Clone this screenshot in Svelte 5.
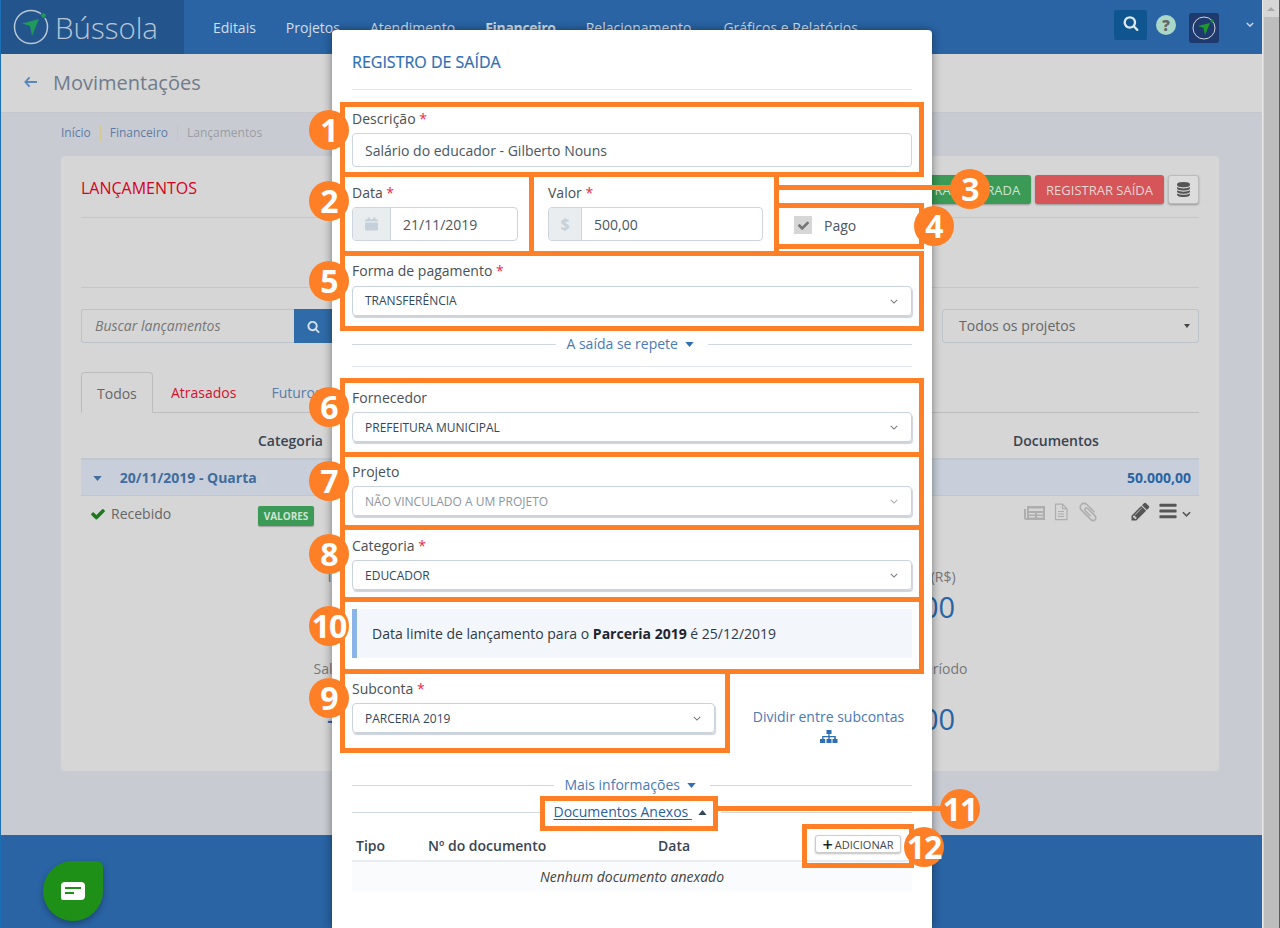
<script>
	const nav = ['Editais', 'Projetos', 'Atendimento', 'Financeiro', 'Relacionamento', 'Gráficos e Relatórios'];

	const icons = {
		search: 'M1216 832q0-185-131.500-316.500t-316.500-131.500-316.500 131.500-131.500 316.500 131.500 316.500 316.500 131.500 316.500-131.500 131.500-316.500zm512 832q0 52-38 90t-90 38q-54 0-90-38l-343-342q-179 124-399 124-143 0-273.500-55.500t-225-150-150-225-55.500-273.500 55.500-273.500 150-225 225-150 273.500-55.500 273.500 55.500 225 150 150 225 55.500 273.500q0 220-124 399l343 343q37 37 37 90z',
		check: 'M1671 566q0 40-28 68l-724 724-136 136q-28 28-68 28t-68-28l-136-136-362-362q-28-28-28-68t28-68l136-136q28-28 68-28t68 28l294 295 656-657q28-28 68-28t68 28l136 136q28 28 28 68z',
		pencil: 'M491 1536l91-91-235-235-91 91v107h128v128h107zm523-928q0-22-22-22-10 0-17 7l-542 542q-7 7-7 17 0 22 22 22 10 0 17-7l542-542q7-7 7-17zm-54-192l416 416-832 832h-416v-416zm683 96q0 53-37 90l-166 166-416-416 166-165q36-38 90-38 53 0 91 38l235 234q37 39 37 91z',
		bars: 'M1664 1344v128q0 26-19 45t-45 19h-1408q-26 0-45-19t-19-45v-128q0-26 19-45t45-19h1408q26 0 45 19t19 45zm0-512v128q0 26-19 45t-45 19h-1408q-26 0-45-19t-19-45v-128q0-26 19-45t45-19h1408q26 0 45 19t19 45zm0-512v128q0 26-19 45t-45 19h-1408q-26 0-45-19t-19-45v-128q0-26 19-45t45-19h1408q26 0 45 19t19 45z',
		database: 'M896 768q237 0 443-43t325-127v170q0 69-103 128t-280 93.500-385 34.500-385-34.500-280-93.500-103-128v-170q119 84 325 127t443 43zm0 768q237 0 443-43t325-127v170q0 69-103 128t-280 93.500-385 34.500-385-34.500-280-93.500-103-128v-170q119 84 325 127t443 43zm0-384q237 0 443-43t325-127v170q0 69-103 128t-280 93.500-385 34.500-385-34.500-280-93.500-103-128v-170q119 84 325 127t443 43zm0-1152q208 0 385 34.500t280 93.500 103 128v128q0 69-103 128t-280 93.500-385 34.500-385-34.500-280-93.500-103-128v-128q0-69 103-128t280-93.500 385-34.500z',
		clip: 'M1596 1385q0 117-79 196t-196 79q-135 0-235-100l-777-776q-113-115-113-271 0-159 110-270t269-111q158 0 273 113l605 606q10 10 10 22 0 16-30.500 46.500t-46.500 30.500q-13 0-23-10l-606-607q-79-77-181-77-106 0-179 75t-73 181q0 105 76 181l776 777q63 63 145 63 64 0 106-42t42-106q0-82-63-145l-581-581q-26-24-60-24-29 0-48 19t-19 48q0 32 25 59l410 410q10 10 10 22 0 16-31 47t-47 31q-12 0-22-10l-410-410q-63-61-63-149 0-82 57-139t139-57q88 0 149 63l581 581q100 98 100 235z'
	};

	// numbered callouts drawn over the screenshot
	const frames = [
		{ x: 340, y: 102, w: 584, h: 75 },
		{ x: 340, y: 172, w: 194, h: 84 },
		{ x: 529, y: 172, w: 250, h: 84 },
		{ x: 774, y: 203, w: 150, h: 46 },
		{ x: 340, y: 251, w: 584, h: 80 },
		{ x: 340, y: 378, w: 584, h: 79 },
		{ x: 340, y: 452, w: 584, h: 78 },
		{ x: 340, y: 525, w: 584, h: 77 },
		{ x: 340, y: 597, w: 584, h: 77 },
		{ x: 340, y: 669, w: 390, h: 84 },
		{ x: 540, y: 796, w: 178, h: 35 },
		{ x: 802, y: 824, w: 112, h: 44 }
	];
	const lines = [
		{ x: 778, y: 185, w: 180, h: 5 },
		{ x: 718, y: 806, w: 230, h: 5 }
	];
	const badges = [
		{ n: 1, x: 329, y: 130 },
		{ n: 2, x: 329, y: 201 },
		{ n: 3, x: 970, y: 189 },
		{ n: 4, x: 934, y: 226 },
		{ n: 5, x: 329, y: 281 },
		{ n: 6, x: 329, y: 407 },
		{ n: 7, x: 329, y: 481 },
		{ n: 8, x: 329, y: 554 },
		{ n: 10, x: 329, y: 626 },
		{ n: 9, x: 329, y: 698 },
		{ n: 11, x: 960, y: 809 },
		{ n: 12, x: 924, y: 847 }
	];
</script>

{#snippet fa(name, cls)}
	<svg class={cls} viewBox="0 0 1792 1792"><path d={icons[name]} /></svg>
{/snippet}

{#snippet chevron()}
	<svg class="chev" viewBox="0 0 10 6"><path d="M1 1l4 4 4-4" /></svg>
{/snippet}

{#snippet caret(up)}
	<svg class="caret" viewBox="0 0 10 6"><path d={up ? 'M0 6h10L5 0z' : 'M0 0h10L5 6z'} /></svg>
{/snippet}

<div class="page">
	<header class="topbar">
		<div class="brand">
			<svg class="logo" viewBox="0 0 36 36">
				<circle cx="18" cy="18" r="16.500" fill="none" stroke="#b9c6d4" stroke-width="1.500" />
				<circle cx="30.500" cy="6.500" r="3" fill="#24548c" />
				<circle cx="30.500" cy="6.500" r="2.300" fill="#1f9a5a" />
				<path d="M9 14.500L26 10l-7 17-2-10z" fill="#1f9a5a" />
			</svg>
			<span>Bússola</span>
		</div>
		<nav>
			{#each nav as item}
				<span class:active={item === 'Financeiro'}>{item}</span>
			{/each}
		</nav>
		<div class="tools">
			<div class="searchbtn">{@render fa('search', 'ico-search')}</div>
			<div class="help">?</div>
			<div class="avatar">
				<svg viewBox="0 0 30 30">
					<circle cx="15" cy="15" r="11" fill="none" stroke="#d0d4da" stroke-width="1" />
					<circle cx="23" cy="8" r="1.500" fill="#1f9a2a" />
					<path d="M9 13l12-3-5 12-1.500-7z" fill="#1f9a2a" />
				</svg>
			</div>
			<svg class="userchev" viewBox="0 0 10 6"><path d="M1 1l4 4 4-4" /></svg>
		</div>
	</header>

	<div class="subheader">
		<svg class="back" viewBox="0 0 14 12"><path d="M6 1L1.500 6 6 11M2 6h12" /></svg>
		<h1>Movimentações</h1>
	</div>

	<main>
		<div class="crumbs">
			<span>Início</span><span>Financeiro</span><span class="cur">Lançamentos</span>
		</div>

		<section class="card">
			<div class="cardhead">
				<h2>LANÇAMENTOS</h2>
				<div class="actions">
					<button class="btn green">REGISTRAR ENTRADA</button>
					<button class="btn red">REGISTRAR SAÍDA</button>
					<button class="btn dbbtn">{@render fa('database', 'ico-db')}</button>
				</div>
			</div>
			<div class="blank"></div>
			<div class="filters">
				<div class="searchbox">
					<span class="fakeinput">Buscar lançamentos</span>
					<span class="go">{@render fa('search', 'ico-go')}</span>
				</div>
				<div class="projects">Todos os projetos <i></i></div>
			</div>
			<div class="tabs">
				<span class="tab on">Todos</span>
				<span class="tab late">Atrasados</span>
				<span class="tab next">Futuros</span>
			</div>
			<div class="thead">
				<span class="th-cat">Categoria</span>
				<span class="th-doc">Documentos</span>
			</div>
			<div class="group">
				<span class="gleft">{@render caret(false)} 20/11/2019 - Quarta</span>
				<span class="gtotal">50.000,00</span>
			</div>
			<div class="row">
				<span class="status">{@render fa('check', 'ico-check')} Recebido</span>
				<span class="tag">VALORES</span>
				<div class="rowicons">
					<svg class="doc" viewBox="0 0 21 16"><path d="M3 1h18v14H2a2 2 0 0 1-2-2V4h2v9h1zM5 3.500v2.500h14V3.500zM5 8v1.500h6V8zm8 0v1.500h6V8zm-8 3v1.500h6V11zm8 0v1.500h6V11z" fill-rule="evenodd" /></svg>
					<svg class="doc file" viewBox="0 0 14 17"><path d="M1.500.7h7l4.500 4.500v11h-11.500zM8.500.7v4.500h4.500M4 8h6M4 10.500h6M4 13h6" /></svg>
					{@render fa('clip', 'ico-clip')}
					{@render fa('pencil', 'ico-pencil')}
					{@render fa('bars', 'ico-bars')}
					<svg class="rowchev" viewBox="0 0 10 6"><path d="M1 1l4 4 4-4" /></svg>
				</div>
			</div>
			<div class="stats">
				<div class="stat"><small>Total de entradas (R$)</small><b class="pos">50.000,00</b></div>
				<div class="stat"><small>Total das saídas (R$)</small><b>50.000,00</b></div>
				<div class="stat low"><small>Saldo anterior ao período</small><b>-50.000,00</b></div>
				<div class="stat low"><small>Saldo ao fim do período</small><b>50.000,00</b></div>
			</div>
		</section>
	</main>

	<footer>
		<div class="chat">
			<svg viewBox="0 0 24 18"><path d="M4 0h16a4 4 0 0 1 4 4v10a4 4 0 0 1-4 4H2a2 2 0 0 1-2-2V4a4 4 0 0 1 4-4z" fill="#fff" /><path d="M4 6h16M4 11h9" stroke="#1e9018" stroke-width="2" /></svg>
		</div>
	</footer>

	<div class="scrollbar"><div class="sb-up"></div><div class="sb-thumb"></div></div>

	<div class="modal">
		<h3>REGISTRO DE SAÍDA</h3>
		<hr class="titlerule" />

		<div class="field">
			<label>Descrição <em>*</em></label>
			<div class="input">Salário do educador - Gilberto Nouns</div>
		</div>

		<div class="split">
			<div class="field w-date">
				<label>Data <em>*</em></label>
				<div class="input addon">
					<span class="add cal">
						<svg viewBox="0 0 12 13"><path d="M0 5h12v6.500a1 1 0 0 1-1 1H1a1 1 0 0 1-1-1zM1 2h1.500V.5h2V2h3V.5h2V2H11a1 1 0 0 1 1 1v1H0V3a1 1 0 0 1 1-1z" /></svg>
					</span>
					<span class="val">21/11/2019</span>
				</div>
			</div>
			<div class="field w-value">
				<label>Valor <em>*</em></label>
				<div class="input addon">
					<span class="add money">$</span>
					<span class="val">500,00</span>
				</div>
			</div>
			<div class="paid">
				<span class="box">{@render fa('check', 'ico-box')}</span>
				<span>Pago</span>
			</div>
		</div>

		<div class="field sel-gap">
			<label>Forma de pagamento <em>*</em></label>
			<div class="select">TRANSFERÊNCIA {@render chevron()}</div>
		</div>

		<div class="fold first"><span>A saída se repete {@render caret(false)}</span></div>
		<hr class="rule" />

		<div class="field f-supplier">
			<label>Fornecedor</label>
			<div class="select">PREFEITURA MUNICIPAL {@render chevron()}</div>
		</div>
		<div class="field sel-gap2">
			<label>Projeto</label>
			<div class="select muted">NÃO VINCULADO A UM PROJETO {@render chevron()}</div>
		</div>
		<div class="field sel-gap2">
			<label>Categoria <em>*</em></label>
			<div class="select">EDUCADOR {@render chevron()}</div>
		</div>

		<div class="alert">Data limite de lançamento para o <strong>Parceria 2019</strong> é 25/12/2019</div>

		<div class="subrow">
			<div class="field w-sub">
				<label>Subconta <em>*</em></label>
				<div class="select">PARCERIA 2019 {@render chevron()}</div>
			</div>
			<div class="divide">
				<span>Dividir entre subcontas</span>
				<svg viewBox="0 0 18 13"><path d="M6.500 0h5v4h-2v2h6.300v3h1.700v4h-5V9h1.700V7.300H9.700V9h1.800v4h-5V9h1.800V7.300H3.500V9h1.700v4H0V9h2.200V6h6.100V4h-1.800z" /></svg>
			</div>
		</div>

		<div class="fold more"><span>Mais informações {@render caret(false)}</span></div>
		<div class="fold docs"><span><u>Documentos Anexos&nbsp;</u> {@render caret(true)}</span></div>

		<div class="doctable">
			<div class="dochead">
				<span class="c1">Tipo</span>
				<span class="c2">Nº do documento</span>
				<span class="c3">Data</span>
				<button class="add-doc"><b>+</b> ADICIONAR</button>
			</div>
			<div class="empty">Nenhum documento anexado</div>
		</div>
	</div>

	<div class="edge"></div>

	{#each frames as f}
		<div class="frame" style="left:{f.x}px;top:{f.y}px;width:{f.w}px;height:{f.h}px"></div>
	{/each}
	{#each lines as l}
		<div class="line" style="left:{l.x}px;top:{l.y}px;width:{l.w}px;height:{l.h}px"></div>
	{/each}
	{#each badges as b}
		<div class="badge" style="left:{b.x - 20}px;top:{b.y - 20}px">{b.n}</div>
	{/each}
</div>

<style>
:global(body) {
	margin: 0;
	font-family: "Open Sans", sans-serif;
	color: #555;
}
.page {
	position: relative;
	width: 1280px;
	height: 928px;
	overflow: hidden;
	background: #c8ccd2;
	display: flex;
	flex-direction: column;
	padding-right: 18px;
	box-sizing: border-box;
}
.edge {
	position: absolute;
	left: 0;
	top: 0;
	bottom: 0;
	width: 1px;
	background: #1a6fb5;
}
.topbar {
	height: 54px;
	flex: none;
	background: #2a64a5;
	display: flex;
	align-items: stretch;
}
.brand {
	width: 184px;
	background: #24548c;
	display: flex;
	align-items: center;
	padding-left: 13px;
	box-sizing: border-box;
	color: #b6c5d6;
	font-size: 29.500px;
	font-weight: 300;
	gap: 6px;
}
.logo {
	width: 36px;
	height: 36px;
	flex: none;
}
nav {
	display: flex;
	gap: 30px;
	padding-left: 29px;
	padding-top: 18px;
	font-size: 14px;
	line-height: 19px;
	color: #d3dfeb;
}
nav .active {
	font-weight: 700;
	letter-spacing: -0.300px;
}
nav span:last-child {
	margin-left: 2px;
}
.tools {
	margin-left: auto;
	display: flex;
	align-items: flex-start;
}
.searchbtn {
	width: 33px;
	height: 30px;
	margin-top: 10px;
	background: #0f5590;
	border-radius: 2px;
	display: flex;
	justify-content: center;
	padding-top: 5px;
	box-sizing: border-box;
}
.ico-search {
	width: 16px;
	height: 16px;
	fill: #dfe8ef;
}
.help {
	width: 20px;
	height: 20px;
	margin: 15px 0 0 9px;
	border-radius: 50%;
	background: #a9d8c8;
	color: #666;
	font-weight: 800;
	font-size: 15px;
	line-height: 20px;
	text-align: center;
}
.avatar {
	width: 30px;
	height: 30px;
	margin: 13px 0 0 13px;
	background: #1f3a6e;
	border-radius: 2px;
}
.avatar svg {
	display: block;
}
.userchev {
	width: 8px;
	height: 5px;
	margin: 22px 8px 0 27px;
	fill: none;
	stroke: #c8d6e6;
	stroke-width: 1.800;
}
.subheader {
	height: 59px;
	flex: none;
	background: #d6d6d6;
	border-bottom: 1px solid #c4c8cc;
	box-sizing: border-box;
	display: flex;
	align-items: center;
	padding-left: 24px;
	gap: 16px;
	padding-bottom: 2px;
}
.back {
	width: 13px;
	height: 12px;
	fill: none;
	stroke: #5b86b8;
	stroke-width: 2;
}
h1 {
	margin: 0;
	font-size: 20px;
	font-weight: 400;
	color: #6f7c8c;
}
main {
	flex: 1;
	padding: 12px 43px 0 61px;
	height: 722px;
}
.crumbs {
	display: flex;
	align-items: flex-start;
	font-size: 12px;
	line-height: 16px;
	color: #5f7ba5;
	height: 31px;
}
.crumbs span + span {
	border-left: 1px solid #d6c88a;
	margin-left: 9px;
	padding-left: 9px;
}
.crumbs .cur {
	color: #9a9da2;
}
.card {
	height: 615px;
	background: #d6d6d6;
	border-radius: 4px;
	padding: 0 20px;
	box-sizing: border-box;
	position: relative;
}
.cardhead {
	height: 62px;
	border-bottom: 1px solid #c6c6c6;
	display: flex;
	align-items: flex-start;
	justify-content: space-between;
	box-sizing: border-box;
}
h2 {
	margin: 21px 0 0;
	font-size: 16px;
	line-height: 22px;
	font-weight: 400;
	color: #d8001c;
}
.actions {
	display: flex;
	gap: 4px;
	margin-top: 19px;
}
.btn {
	height: 29px;
	border: 0;
	border-radius: 3px;
	font: 400 13px "Open Sans", sans-serif;
	box-shadow: 0 1px 2px rgba(0, 0, 0, 0.3);
	padding: 0;
}
.green {
	background: #3a9a56;
	color: #cfe3d5;
	width: 150px;
}
.red {
	background: #d55558;
	color: #e8d6d6;
	width: 129px;
}
.dbbtn {
	width: 31px;
	background: #dcdcdc;
	border: 1px solid #bbb;
	display: flex;
	align-items: center;
	justify-content: center;
}
.ico-db {
	width: 15px;
	height: 15px;
	fill: #555;
}
.blank {
	height: 70px;
	border-bottom: 1px solid #c6c6c6;
	box-sizing: border-box;
}
.filters {
	display: flex;
	justify-content: space-between;
	margin-top: 21px;
}
.searchbox {
	display: flex;
	height: 34px;
}
.fakeinput {
	width: 213px;
	border: 1px solid #bcc3ca;
	border-right: 0;
	border-radius: 3px 0 0 3px;
	box-sizing: border-box;
	font-size: 14px;
	font-style: italic;
	line-height: 32px;
	padding-left: 13px;
	color: #777;
}
.go {
	width: 44px;
	background: #2f6ba8;
	display: flex;
	align-items: center;
	justify-content: center;
	padding-right: 6px;
	box-sizing: border-box;
}
.ico-go {
	width: 13px;
	height: 13px;
	fill: #d6e0ea;
}
.projects {
	width: 257px;
	height: 34px;
	border: 1px solid #bcc3ca;
	border-radius: 3px;
	box-sizing: border-box;
	font-size: 14px;
	line-height: 32px;
	padding-left: 16px;
	color: #666;
	position: relative;
}
.projects i {
	position: absolute;
	right: 8px;
	top: 14px;
	border: 3.500px solid transparent;
	border-top: 4px solid #444;
	border-bottom: 0;
}
.tabs {
	margin-top: 29px;
	height: 40px;
	border-bottom: 1px solid #bcbcbc;
	display: flex;
	font-size: 14px;
	line-height: 42px;
	box-sizing: content-box;
}
.tab {
	padding: 0 17px 0 18px;
}
.tab.on {
	border: 1px solid #bcbcbc;
	border-bottom: 1px solid #d6d6d6;
	border-radius: 4px 4px 0 0;
	color: #666;
	height: 41px;
	box-sizing: border-box;
	line-height: 41px;
	width: 72px;
	padding: 0 0 0 15px;
}
.tab.late {
	color: #d8102c;
}
.tab.next {
	color: #5b7ba8;
}
.thead {
	height: 45px;
	position: relative;
	font-size: 14px;
	font-weight: 600;
	color: #3a4450;
}
.th-cat {
	position: absolute;
	left: 177px;
	top: 18px;
}
.th-doc {
	position: absolute;
	left: 932px;
	top: 18px;
}
.group {
	height: 38px;
	background: #c8cfda;
	border-top: 2px solid #c2c7cf;
	border-bottom: 1px solid #bfc6d0;
	box-sizing: border-box;
	display: flex;
	align-items: center;
	justify-content: space-between;
	padding: 0 8px 0 12px;
	font-size: 14px;
	font-weight: 700;
	color: #3f6d9e;
}
.gleft .caret {
	margin: 0 14px 0 0;
	width: 9px;
	height: 5px;
	fill: #3f6d9e;
}
.gtotal {
	color: #2a64a5;
}
.row {
	height: 40px;
	position: relative;
	font-size: 14px;
	color: #666;
}
.status {
	position: absolute;
	left: 9px;
	top: 8px;
	display: flex;
	align-items: center;
	gap: 5px;
	line-height: 20px;
}
.ico-check {
	width: 16px;
	height: 16px;
	fill: #1c7a1c;
}
.tag {
	position: absolute;
	left: 177px;
	top: 10px;
	width: 56px;
	height: 20px;
	background: #3a9a56;
	color: #cfe3d5;
	border-radius: 2px;
	font-size: 10px;
	font-weight: 700;
	line-height: 20px;
	text-align: center;
	box-shadow: 0 1px 1px rgba(0, 0, 0, 0.25);
}
.rowicons {
	position: absolute;
	left: 943px;
	top: 8px;
	width: 168px;
	height: 20px;
}
.rowicons > :global(svg) {
	position: absolute;
}
.doc {
	left: 0;
	top: 1px;
	width: 21px;
	height: 16px;
	fill: #aeaeae;
}
.file {
	left: 30px;
	top: -1px;
	width: 14px;
	height: 18px;
	fill: none;
	stroke: #aeaeae;
	stroke-width: 1.200;
}
.rowicons :global(.ico-clip) {
	left: 53px;
	top: -3px;
	width: 22px;
	height: 22px;
	fill: #aeaeae;
}
.rowicons :global(.ico-pencil) {
	left: 106px;
	top: -3px;
	width: 21px;
	height: 21px;
	fill: #555;
}
.rowicons :global(.ico-bars) {
	left: 134px;
	top: -3px;
	width: 20px;
	height: 20px;
	fill: #555;
}
.rowchev {
	left: 158px;
	top: 7px;
	width: 9px;
	height: 6px;
	fill: none;
	stroke: #555;
	stroke-width: 1.800;
}
.stats {
	display: grid;
	grid-template-columns: 490px 495px;
	margin: 31px 0 0 71px;
	row-gap: 32px;
}
.stat {
	text-align: center;
	display: flex;
	flex-direction: column;
}
.stat small {
	font-size: 14px;
	line-height: 20px;
	color: #777;
}
.stat b {
	font-size: 29px;
	font-weight: 400;
	line-height: 40px;
	color: #2a64a5;
}
.stat.low b {
	margin-top: 20px;
}
.stat b.pos {
	color: #1c7a1c;
	font-weight: 600;
}
footer {
	height: 93px;
	flex: none;
	background: #2a64a5;
	position: relative;
	margin-right: -18px;
}
.chat {
	position: absolute;
	left: 43px;
	top: 26px;
	width: 60px;
	height: 60px;
	background: #1e9018;
	border-radius: 50% 6px 50% 50%;
	box-shadow: 0 3px 6px rgba(0, 0, 0, 0.3);
	display: flex;
	align-items: center;
	justify-content: center;
}
.chat svg {
	width: 24px;
	height: 18px;
}
.scrollbar {
	position: absolute;
	right: 0;
	top: 0;
	bottom: 0;
	width: 18px;
	background: #d6d6d6;
	border-left: 1px solid #e8e8e8;
	border-right: 1px solid #2a64a5;
	box-sizing: border-box;
	padding-left: 1px;
}
.sb-up {
	height: 17px;
	position: relative;
}
.sb-up::after {
	content: '';
	position: absolute;
	left: 3px;
	top: 7px;
	border: 4px solid transparent;
	border-bottom: 4px solid #a8a8a8;
	border-top: 0;
}
.sb-thumb {
	height: 911px;
	background: #bdbdbd;
}

.modal {
	position: absolute;
	left: 332px;
	top: 30px;
	width: 600px;
	height: 898px;
	background: #fff;
	border-radius: 4px 4px 0 0;
	box-shadow: 0 0 10px rgba(0, 0, 0, 0.45);
	padding: 22px 20px 0;
	box-sizing: border-box;
	color: #4a5663;
}
h3 {
	margin: 0;
	font-size: 16px;
	line-height: 20px;
	font-weight: 500;
	color: #2f6db5;
	-webkit-text-stroke: 0.200px #2f6db5;
}
.titlerule {
	border: 0;
	border-top: 1px solid #e3e7eb;
	margin: 17px 0 18px;
}
.field label {
	display: block;
	font-size: 14px;
	line-height: 20px;
	padding-top: 1px;
	margin-bottom: 4px;
	color: #4a4f55;
}
.field em {
	color: #f02849;
	font-style: normal;
}
.input {
	height: 34px;
	border: 1px solid #cdd6df;
	border-radius: 4px;
	box-sizing: border-box;
	font-size: 14px;
	line-height: 34px;
	padding-left: 12px;
	color: #4a5663;
}
.addon {
	display: flex;
	padding: 0;
	overflow: hidden;
}
.add {
	background: #e9edf0;
	border-right: 1px solid #cdd6df;
	display: flex;
	align-items: center;
	justify-content: center;
	flex: none;
	color: #c5d1da;
	box-sizing: border-box;
}
.cal {
	width: 38px;
}
.cal svg {
	width: 13px;
	height: 14px;
	fill: #c5d1da;
}
.money {
	width: 33px;
	font-weight: 700;
	font-size: 16px;
}
.val {
	padding-left: 12px;
}
.split {
	display: grid;
	grid-template-columns: 166px 215px 1fr;
	column-gap: 30px;
	margin-top: 15px;
}
.paid {
	display: flex;
	align-items: center;
	font-size: 14px;
	padding: 31px 0 0 1px;
	gap: 12px;
	height: 24px;
}
.box {
	width: 18px;
	height: 18px;
	background: #d6d6d6;
	display: flex;
	align-items: center;
	justify-content: center;
}
.ico-box {
	width: 13px;
	height: 13px;
	fill: #777;
}
.select {
	height: 30px;
	border: 1px solid #c9d3dd;
	border-radius: 4px;
	box-shadow: 1px 2px 1px rgba(90, 110, 130, 0.3);
	box-sizing: border-box;
	font-size: 12px;
	line-height: 30px;
	padding-left: 12px;
	color: #33475b;
	position: relative;
}
.select.muted {
	color: #8c959f;
}
.chev {
	position: absolute;
	right: 13px;
	top: 12px;
	width: 8px;
	height: 5px;
	fill: none;
	stroke: #777;
	stroke-width: 1.300;
}
.muted .chev {
	stroke: #aaa;
}
.sel-gap {
	margin-top: 20px;
}
.sel-gap label {
	padding-top: 0;
	margin-bottom: 5px;
}
.sel-gap .select {
	line-height: 28px;
}
.sel-gap2 {
	margin-top: 19px;
}
.f-supplier {
	margin-top: 20px;
}
.fold {
	display: flex;
	align-items: center;
	justify-content: center;
	font-size: 14px;
	line-height: 20px;
	color: #4a7ab5;
	position: relative;
}
.fold::before {
	content: '';
	position: absolute;
	left: 0;
	right: 0;
	top: 50%;
	border-top: 1px solid #cfd8df;
}
.fold span {
	position: relative;
	background: #fff;
	padding: 0 14px 0 10px;
}
.caret {
	width: 9px;
	height: 5px;
	fill: #2f6db5;
	margin-left: 3px;
	vertical-align: 2px;
}
.first {
	margin-top: 18px;
}
.rule {
	border: 0;
	border-top: 1px solid #e3e7eb;
	margin: 12px 0 0;
}
.alert {
	margin-top: 19px;
	height: 49px;
	background: #f3f6fb;
	border-left: 5px solid #8ab4e8;
	box-sizing: border-box;
	padding-left: 15px;
	font-size: 14px;
	line-height: 49px;
	color: #2f3a46;
}
.alert strong {
	color: #1d2530;
}
.subrow {
	display: flex;
	margin-top: 20px;
}
.w-sub {
	width: 363px;
	flex: none;
}
.divide {
	flex: 1;
	display: flex;
	flex-direction: column;
	align-items: center;
	padding: 29px 0 0 30px;
	font-size: 14px;
	line-height: 20px;
	color: #4a7ab5;
}
.divide svg {
	width: 18px;
	height: 13px;
	margin-top: 3px;
	fill: #2f6db5;
}
.more {
	margin-top: 32px;
}
.docs {
	margin-top: 7px;
	color: #2a5f9e;
}
.docs u {
	text-underline-offset: 2px;
}
.docs .caret {
	fill: #33475b;
	margin-left: 2px;
}
.doctable {
	margin-top: 3px;
}
.dochead {
	height: 35px;
	border-bottom: 2px solid #e9edf1;
	position: relative;
	font-size: 14px;
	font-weight: 600;
	line-height: 36px;
	color: #3a4450;
}
.c1 { position: absolute; left: 4px; top: 3px; }
.c2 { position: absolute; left: 76px; top: 3px; }
.c3 { position: absolute; left: 306px; top: 3px; }
.add-doc {
	position: absolute;
	right: 11px;
	top: 10px;
	width: 86px;
	height: 18px;
	padding: 0;
	border: 1px solid #ccc;
	border-radius: 3px;
	background: #fff;
	box-shadow: 0 1px 2px rgba(0, 0, 0, 0.25);
	font: 400 11px "Open Sans", sans-serif;
	color: #444;
	display: flex;
	align-items: center;
	justify-content: center;
	gap: 2px;
}
.add-doc b {
	font-size: 18px;
	font-weight: 600;
	line-height: 15px;
	color: #222;
}
.empty {
	height: 29px;
	background: #f9fbfd;
	text-align: center;
	font-size: 14px;
	font-style: italic;
	line-height: 29px;
	color: #444;
}

.frame {
	position: absolute;
	border: 5px solid #ff7f27;
	box-sizing: border-box;
}
.line {
	position: absolute;
	background: #ff7f27;
}
.badge {
	position: absolute;
	width: 40px;
	height: 40px;
	border-radius: 50%;
	background: #ff7f27;
	color: #fff;
	font-size: 32px;
	font-weight: 700;
	line-height: 40px;
	text-align: center;
	letter-spacing: -1px;
}
</style>
